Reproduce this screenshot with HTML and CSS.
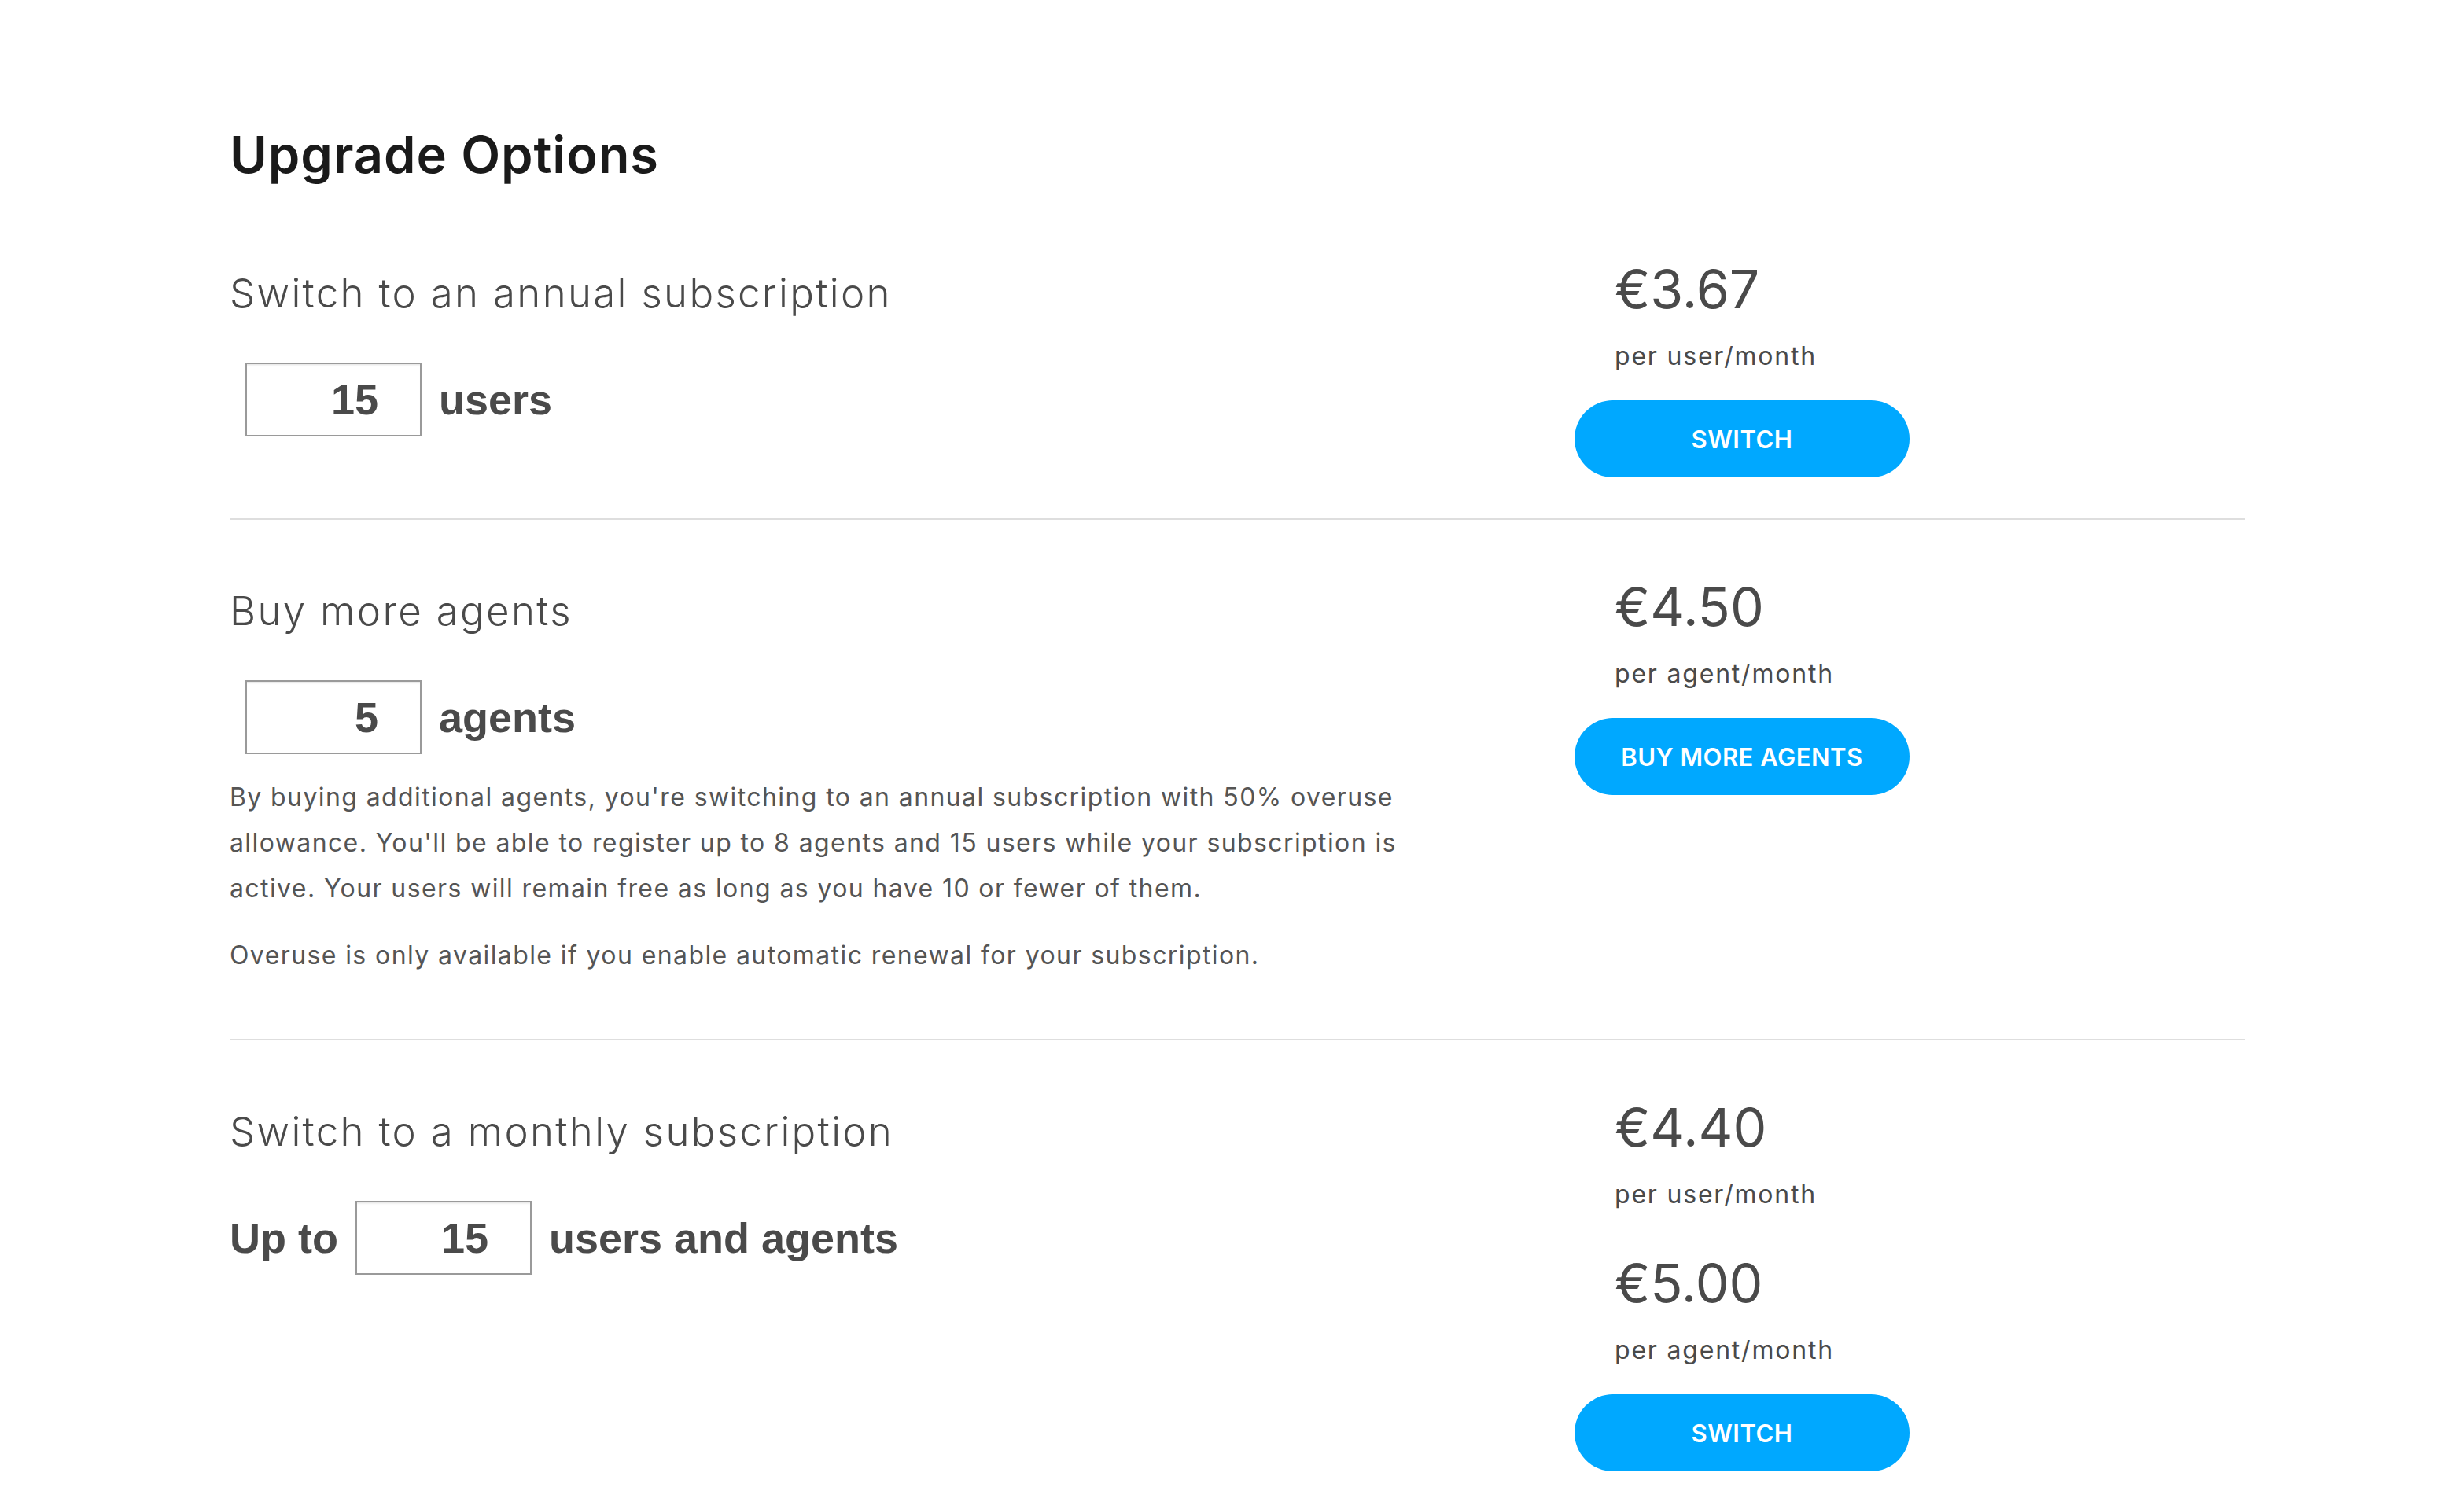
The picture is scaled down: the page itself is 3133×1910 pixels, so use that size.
FILE: index.html
```html
<!DOCTYPE html>
<html lang="en">
<head>
<meta charset="utf-8">
<title>Upgrade Options</title>
<link rel="stylesheet" href="styles.css">
</head>
<body>
<main class="page">
  <h1 class="title">Upgrade Options</h1>

  <section class="option option--first">
    <div class="option-main">
      <h2 class="option-heading">Switch to an annual subscription</h2>
      <div class="qty-row qty-row--indent">
        <div class="qty-box">15</div>
        <span class="qty-label">users</span>
      </div>
    </div>
    <div class="option-side">
      <div class="price">€3.67</div>
      <div class="unit">per user/month</div>
      <button class="cta">SWITCH</button>
    </div>
  </section>

  <section class="option option--sep">
    <div class="option-main">
      <h2 class="option-heading">Buy more agents</h2>
      <div class="qty-row qty-row--indent">
        <div class="qty-box">5</div>
        <span class="qty-label">agents</span>
      </div>
      <p class="note note--first">By buying additional agents, you're switching to an annual subscription with 50% overuse allowance. You'll be able to register up to 8 agents and 15 users while your subscription is active. Your users will remain free as long as you have 10 or fewer of them.</p>
      <p class="note note--last">Overuse is only available if you enable automatic renewal for your subscription.</p>
    </div>
    <div class="option-side">
      <div class="price">€4.50</div>
      <div class="unit">per agent/month</div>
      <button class="cta">BUY MORE AGENTS</button>
    </div>
  </section>

  <section class="option option--sep option--last">
    <div class="option-main">
      <h2 class="option-heading">Switch to a monthly subscription</h2>
      <div class="qty-row">
        <span class="qty-label">Up to</span>
        <div class="qty-box">15</div>
        <span class="qty-label">users and agents</span>
      </div>
    </div>
    <div class="option-side">
      <div class="price">€4.40</div>
      <div class="unit">per user/month</div>
      <div class="price price--next">€5.00</div>
      <div class="unit">per agent/month</div>
      <button class="cta">SWITCH</button>
    </div>
  </section>
</main>
</body>
</html>
```

FILE: styles.css
```css
* { box-sizing: border-box; }

html, body {
  margin: 0;
  padding: 0;
  background: #ffffff;
}

body {
  font-family: Inter, "Noto Sans", sans-serif;
  color: #4a4a4a;
}

.page {
  padding: 158px 279px 38px 292px;
}

.title {
  margin: 0;
  font-family: Inter, sans-serif;
  font-weight: 600;
  font-size: 65px;
  line-height: 77px;
  color: #1a1a1a;
  letter-spacing: 0.9px;
}

.option {
  display: grid;
  grid-template-columns: 1710px 1fr;
  padding-top: 72px;
  padding-bottom: 52px;
}

.option--first {
  margin-top: 20px;
}

.option--sep {
  border-top: 2px solid #dedede;
  padding-top: 70px;
}

.option--last {
  padding-bottom: 0;
}

.option-heading {
  margin: 18px 0 0;
  font-family: Inter, "Liberation Sans", sans-serif;
  font-weight: 300;
  font-size: 51px;
  line-height: 56px;
  letter-spacing: 2.3px;
  color: #4a4a4a;
}

.qty-row {
  display: flex;
  align-items: center;
  gap: 22px;
  margin-top: 60px;
}

.qty-row--indent {
  padding-left: 20px;
}

.qty-box {
  width: 224px;
  height: 94px;
  border: 2px solid #9a9a9a;
  box-shadow: inset 0 3px 3px -2px rgba(0, 0, 0, 0.12);
  display: flex;
  align-items: center;
  justify-content: flex-end;
  padding-right: 53px;
  font-family: "Liberation Sans", Arial, sans-serif;
  font-weight: 700;
  font-size: 54px;
  color: #4a4a4a;
}

.qty-label {
  font-family: "Liberation Sans", Arial, sans-serif;
  font-weight: 700;
  font-size: 54px;
  line-height: 62px;
  color: #4a4a4a;
}

.note {
  margin: 26px 0 0;
  width: 1520px;
  font-family: Inter, sans-serif;
  font-size: 32px;
  line-height: 58px;
  letter-spacing: 1.4px;
  color: #555555;
}

.note--last {
  margin-top: 27px;
  margin-bottom: 25px;
}

.option-side {
  display: flex;
  flex-direction: column;
  align-items: flex-start;
}

.price {
  padding-left: 51px;
  font-family: Inter, sans-serif;
  font-weight: 400;
  font-size: 68px;
  line-height: 80px;
  color: #4a4a4a;
}

.price--next {
  margin-top: 52px;
}

.unit {
  margin-top: 26px;
  padding-left: 51px;
  font-family: Inter, sans-serif;
  font-size: 32px;
  line-height: 40px;
  letter-spacing: 1.8px;
  color: #4a4a4a;
}

.cta {
  margin-top: 36px;
  width: 426px;
  height: 98px;
  border: none;
  border-radius: 49px;
  background: #00a8ff;
  color: #ffffff;
  font-family: Inter, sans-serif;
  font-weight: 600;
  font-size: 31px;
  letter-spacing: 0.5px;
  cursor: pointer;
  padding: 0;
}
```
